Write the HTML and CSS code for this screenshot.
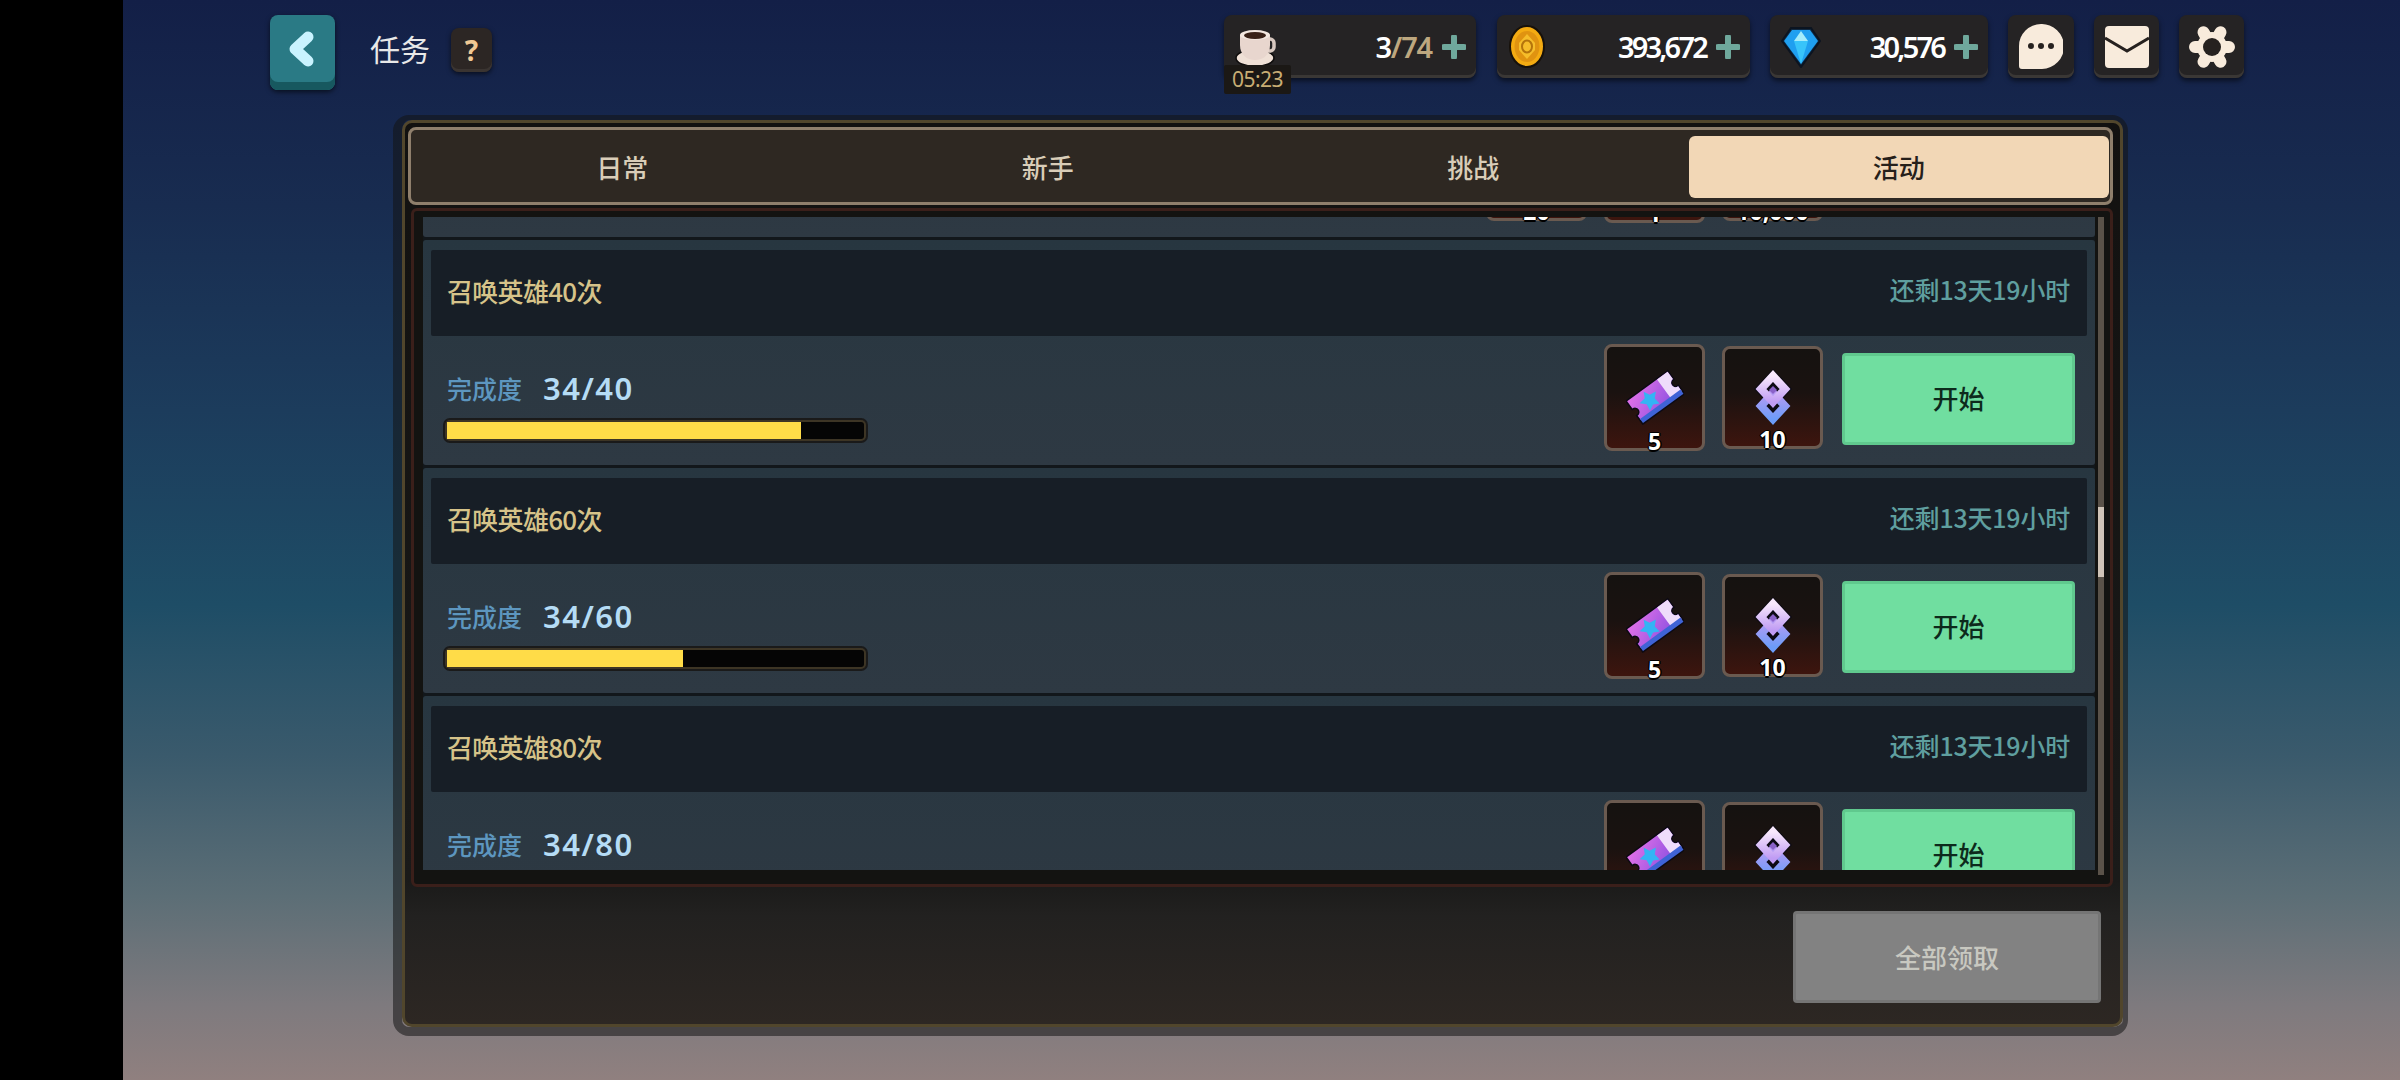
FILE: index.html
```html
<!DOCTYPE html>
<html lang="zh">
<head>
  <meta charset="UTF-8">
  <title>任务</title>
  <link rel="stylesheet" href="styles.css">
</head>
<body>
  <svg class="defs" width="0" height="0">
    <defs>
      <linearGradient id="ticketBody" x1="0" y1="0" x2="1" y2="1">
        <stop offset="0" stop-color="#e070e8"/>
        <stop offset="1" stop-color="#8a4fe0"/>
      </linearGradient>
      <linearGradient id="knotTop" x1="0" y1="0" x2="0" y2="1">
        <stop offset="0" stop-color="#f8e8fc"/>
        <stop offset="1" stop-color="#c09cf4"/>
      </linearGradient>
      <linearGradient id="knotBottom" x1="0" y1="0" x2="0" y2="1">
        <stop offset="0" stop-color="#b89cf4"/>
        <stop offset="1" stop-color="#6c9cf8"/>
      </linearGradient>
      <symbol id="ticket" viewBox="0 0 58 56">
        <g transform="rotate(-36 29 28)">
          <path d="M4 15h50v9a4.500 4.500 0 0 0 0 9v9H4v-9a4.500 4.500 0 0 0 0-9z" fill="#0c0a14" stroke="#0c0a14" stroke-width="3"/>
          <path d="M4 15h50v9a4.500 4.500 0 0 0 0 9v6H4v-6a4.500 4.500 0 0 0 0-9z" fill="url(#ticketBody)"/>
          <path d="M41 15h13v9a4.500 4.500 0 0 0 0 9v6H41z" fill="#efdcfb"/>
          <path d="M4 37h50v5H4z" fill="#3f63d6"/>
          <path d="M23 17l3 6 7 1-5 5 1 7-6-3-6 3 1-7-5-5 7-1z" fill="#33b4f4"/>
        </g>
      </symbol>
      <symbol id="knot" viewBox="0 0 40 56">
        <path d="M20 0L39 20 20 40 1 20z" fill="#0c0a14"/>
        <path d="M20 18L37 36 20 56 3 36z" fill="#0c0a14"/>
        <path d="M20 24L32 37 20 50 8 37z" fill="none" stroke="url(#knotBottom)" stroke-width="8"/>
        <path d="M20 7L32 20 20 33 8 20z" fill="none" stroke="url(#knotTop)" stroke-width="8"/>
        <path d="M20 17L24 21 20 25 16 21z" fill="#8a62c8"/>
      </symbol>
    </defs>
  </svg>

  <div class="sidebar"></div>

  <div class="stage">
    <!-- Top bar -->
    <header class="topbar">
      <button class="back-btn">
        <svg width="65" height="68" viewBox="0 0 65 68"><path d="M38 22L25 34l13 12" fill="none" stroke="#c9f3ff" stroke-width="11" stroke-linecap="round" stroke-linejoin="round"/></svg>
      </button>
      <h1 class="page-title">任务</h1>
      <button class="help-btn">?</button>

      <div class="resources">
        <div class="pill pill-coffee">
          <svg class="res-icon" width="41" height="38" viewBox="0 0 41 38">
            <ellipse cx="20" cy="29" rx="19" ry="8.500" fill="#efe0d6" stroke="#0e0c0c" stroke-width="1.500"/>
            <path d="M32 10h3a4 4 0 0 1 4 4v4a4 4 0 0 1-4 4h-5" fill="none" stroke="#d8c8c0" stroke-width="3.500"/>
            <path d="M5 6h30v10c0 10-7 15-15 15S5 26 5 16z" fill="#e8d6ce"/>
            <ellipse cx="20" cy="6" rx="15" ry="5" fill="#f4e8e0"/>
            <ellipse cx="20" cy="6.500" rx="11" ry="3.400" fill="#3a2218"/>
          </svg>
          <span class="amount">3<span class="amount-max">/74</span></span>
          <svg class="plus" width="24" height="24" viewBox="0 0 24 24"><path d="M12 2v20M2 12h20" stroke="#6fa89c" stroke-width="6" stroke-linecap="round"/></svg>
          <span class="timer">05:23</span>
        </div>
        <div class="pill pill-gold">
          <svg class="res-icon" width="36" height="43" viewBox="0 0 36 43">
            <ellipse cx="18" cy="21.500" rx="17" ry="20.500" fill="#f4ab12" stroke="#17110a" stroke-width="2"/>
            <ellipse cx="18" cy="21.500" rx="12.500" ry="15.500" fill="#e09310"/>
            <path d="M18 9l8 9v7l-8 9-8-9v-7z" fill="#f6bd2a"/>
            <ellipse cx="18" cy="21.500" rx="5" ry="6" fill="none" stroke="#b4740c" stroke-width="2"/>
          </svg>
          <span class="amount">393,672</span>
          <svg class="plus" width="24" height="24" viewBox="0 0 24 24"><path d="M12 2v20M2 12h20" stroke="#6fa89c" stroke-width="6" stroke-linecap="round"/></svg>
        </div>
        <div class="pill pill-gem">
          <svg class="res-icon" width="40" height="42" viewBox="0 0 40 42">
            <path d="M10 2h20l9 13-19 26L1 15z" fill="#0f2a44" stroke="#0c1420" stroke-width="2"/>
            <path d="M11 4h18l8 11-17 23L3 15z" fill="#1f9ff0"/>
            <path d="M13 15h14l-7 23z" fill="#38c4fa"/>
            <path d="M20 5l7 10H13z" fill="#a4ecfb"/>
          </svg>
          <span class="amount">30,576</span>
          <svg class="plus" width="24" height="24" viewBox="0 0 24 24"><path d="M12 2v20M2 12h20" stroke="#6fa89c" stroke-width="6" stroke-linecap="round"/></svg>
        </div>
        <button class="icon-btn icon-btn-chat">
          <svg width="44" height="45" viewBox="0 0 44 45">
            <path d="M22 0a22 22 0 0 1 1 45H3a3 3 0 0 1-3-3V22A22 22 0 0 1 22 0z" fill="#f8ebdc"/>
            <circle cx="12" cy="22" r="3" fill="#26211f"/><circle cx="22" cy="22" r="3" fill="#26211f"/><circle cx="32" cy="22" r="3" fill="#26211f"/>
          </svg>
        </button>
        <button class="icon-btn">
          <svg width="44" height="42" viewBox="0 0 44 42">
            <rect width="44" height="42" rx="4" fill="#f8ebdc"/>
            <path d="M0 12l22 13 22-13" fill="none" stroke="#26211f" stroke-width="3"/>
          </svg>
        </button>
        <button class="icon-btn">
          <svg width="46" height="46" viewBox="0 0 46 46">
            <g stroke="#f8ebdc" stroke-width="12" stroke-linecap="round">
              <path d="M6 23h34M14.500 8.300l17 29.400M31.500 8.300l-17 29.400"/>
            </g>
            <circle cx="23" cy="23" r="15" fill="#f8ebdc"/>
            <circle cx="23" cy="23" r="9" fill="#26211f"/>
          </svg>
        </button>
      </div>
    </header>

    <!-- Quest panel -->
    <main class="panel">
      <div class="panel-inner">
        <nav class="tabs">
          <div class="tab">日常</div>
          <div class="tab">新手</div>
          <div class="tab">挑战</div>
          <div class="tab tab-active">活动</div>
        </nav>

        <div class="list-frame">
          <div class="list">
            <!-- Row scrolled mostly out of view -->
            <section class="row row-scrolled">
              <div class="row-head"></div>
              <div class="row-body">
                <div class="rewards">
                  <div class="item"><span class="count">20</span></div>
                  <div class="item item-lg"><span class="count">1</span></div>
                  <div class="item"><span class="count">10,000</span></div>
                </div>
              </div>
            </section>

            <section class="row">
              <div class="row-head">
                <span class="quest-name">召唤英雄40次</span>
                <span class="time-left">还剩13天19小时</span>
              </div>
              <div class="row-body">
                <div class="progress-col">
                  <div class="progress-label"><span class="label-text">完成度</span><span class="progress-num">34/40</span></div>
                  <div class="bar"><div class="bar-fill" style="width: 85%"></div></div>
                </div>
                <div class="rewards">
                  <div class="item item-lg"><svg width="58" height="56"><use href="#ticket"/></svg><span class="count">5</span></div>
                  <div class="item"><svg width="40" height="56"><use href="#knot"/></svg><span class="count">10</span></div>
                </div>
                <button class="start-btn">开始</button>
              </div>
            </section>

            <section class="row">
              <div class="row-head">
                <span class="quest-name">召唤英雄60次</span>
                <span class="time-left">还剩13天19小时</span>
              </div>
              <div class="row-body">
                <div class="progress-col">
                  <div class="progress-label"><span class="label-text">完成度</span><span class="progress-num">34/60</span></div>
                  <div class="bar"><div class="bar-fill" style="width: 56.7%"></div></div>
                </div>
                <div class="rewards">
                  <div class="item item-lg"><svg width="58" height="56"><use href="#ticket"/></svg><span class="count">5</span></div>
                  <div class="item"><svg width="40" height="56"><use href="#knot"/></svg><span class="count">10</span></div>
                </div>
                <button class="start-btn">开始</button>
              </div>
            </section>

            <section class="row">
              <div class="row-head">
                <span class="quest-name">召唤英雄80次</span>
                <span class="time-left">还剩13天19小时</span>
              </div>
              <div class="row-body">
                <div class="progress-col">
                  <div class="progress-label"><span class="label-text">完成度</span><span class="progress-num">34/80</span></div>
                  <div class="bar"><div class="bar-fill" style="width: 42.5%"></div></div>
                </div>
                <div class="rewards">
                  <div class="item item-lg"><svg width="58" height="56"><use href="#ticket"/></svg><span class="count">5</span></div>
                  <div class="item"><svg width="40" height="56"><use href="#knot"/></svg><span class="count">10</span></div>
                </div>
                <button class="start-btn">开始</button>
              </div>
            </section>
          </div>

          <div class="scrollbar"><div class="scroll-thumb"></div></div>
        </div>

        <footer class="panel-foot">
          <button class="claim-btn">全部领取</button>
        </footer>
      </div>
    </main>
  </div>
</body>
</html>
```

FILE: styles.css
```css
/* Base styles */
html, body {
  margin: 0;
  height: 100%;
}

body {
  display: flex;
  width: 2400px;
  height: 1080px;
  overflow: hidden;
  background-color: #000;
  font-family: "Noto Sans CJK SC", "Noto Sans", sans-serif;
  color: #fff;
}

button {
  font-family: inherit;
  border: none;
  padding: 0;
}

.defs {
  position: absolute;
}

.sidebar {
  width: 123px;
  flex: none;
  background-color: #000;
}

.stage {
  flex: 1;
  background: linear-gradient(180deg, #131f47 0%, #182c50 19%, #1c3c5c 38%, #1e4d66 56%, #3a5a6c 70%, #5c6e76 83%, #7e7a7e 93%, #90807f 100%);
}

/* Top bar */
.topbar {
  display: flex;
  align-items: flex-start;
  height: 75px;
  padding: 15px 156px 0 147px;
}

.back-btn {
  display: flex;
  width: 65px;
  height: 75px;
  flex: none;
  border-radius: 8px;
  background-color: #2a7a85;
  box-shadow: inset 0 -8px 0 #17585f, 0 2px 5px rgba(0, 0, 0, 0.6);
}

.page-title {
  margin: 12px 0 0 35px;
  font-size: 30px;
  font-weight: 400;
  line-height: 42px;
  color: #e8e8e8;
}

.help-btn {
  width: 41px;
  height: 44px;
  margin: 13px 0 0 21px;
  border-radius: 8px;
  background-color: #2c2624;
  box-shadow: inset 0 -3px 0 #3a3431, 0 2px 5px rgba(0, 0, 0, 0.6);
  font-family: "Noto Sans", sans-serif;
  font-size: 28px;
  font-weight: 700;
  line-height: 40px;
  color: #f0c894;
}

.resources {
  display: flex;
  gap: 20px;
  margin-left: auto;
}

.pill {
  position: relative;
  display: flex;
  align-items: center;
  height: 63px;
  padding-right: 10px;
  box-sizing: border-box;
  border-radius: 8px;
  background-color: #252324;
  box-shadow: inset 0 -3px 0 #3a3735, 0 3px 5px rgba(0, 0, 0, 0.55);
}

.pill-coffee {
  width: 252px;
  margin-right: 1px;
  padding-left: 11px;
}

.pill-gold {
  width: 253px;
  padding-left: 12px;
}

.pill-gem {
  width: 218px;
  padding-left: 11px;
}

.res-icon {
  flex: none;
}

.pill-coffee .res-icon {
  margin-top: 2px;
}

.amount {
  margin-left: auto;
  font-family: "Noto Sans", sans-serif;
  font-size: 29px;
  font-weight: 600;
  letter-spacing: -2.8px;
}

.pill-coffee .amount {
  letter-spacing: -1.2px;
}

.amount-max {
  color: #bda77f;
}

.plus {
  flex: none;
  margin-left: 10px;
}

.timer {
  position: absolute;
  left: 0;
  top: 50px;
  width: 67px;
  height: 29px;
  border-radius: 2px;
  background-color: #1b1815;
  font-family: "Noto Sans", sans-serif;
  font-size: 21px;
  line-height: 29px;
  letter-spacing: -0.5px;
  text-align: center;
  color: #c8ad74;
}

.icon-btn {
  display: flex;
  align-items: center;
  justify-content: center;
  width: 65px;
  height: 63px;
  border-radius: 8px;
  background-color: #252324;
  box-shadow: inset 0 -3px 0 #3a3735, 0 3px 5px rgba(0, 0, 0, 0.55);
}

.icon-btn-chat {
  width: 66px;
}

/* Quest panel */
.panel {
  width: 1735px;
  height: 921px;
  margin: 25px 0 0 270px;
  box-sizing: border-box;
  border-style: solid;
  border-width: 5px 5px 9px 9px;
  border-color: rgba(20, 20, 20, 0.55);
  border-radius: 16px;
}

.panel-inner {
  display: flex;
  flex-direction: column;
  height: 100%;
  box-sizing: border-box;
  border: 3px solid #51462c;
  border-radius: 10px;
  padding: 4px 7px 0 3px;
  background: linear-gradient(180deg, #121110 0%, #1a1a19 84%, #222120 88%, #2d2723 100%);
}

.tabs {
  display: grid;
  grid-template-columns: repeat(4, 1fr);
  column-gap: 5px;
  height: 78px;
  flex: none;
  box-sizing: border-box;
  padding: 6px 1px 4px 1px;
  border: 3px solid #8f7f6c;
  border-radius: 8px;
  background-color: #2e2822;
}

.tab {
  display: flex;
  align-items: center;
  justify-content: center;
  padding-bottom: 2px;
  border-radius: 6px;
  font-size: 26px;
  font-weight: 500;
  color: #d9cdb8;
}

.tab-active {
  background-color: #f2d7b6;
  color: #26201a;
}

.list-frame {
  display: flex;
  height: 679px;
  flex: none;
  margin: 3px 0 0 3px;
  box-sizing: border-box;
  padding: 6px 6px 14px 9px;
  border: 3px solid #3a1f1a;
  border-radius: 6px;
  background-color: #131311;
}

.list {
  flex: 1;
  min-width: 0;
  overflow: hidden;
  background-color: #12171b;
}

.row {
  height: 225px;
  margin-bottom: 3px;
  box-sizing: border-box;
  padding: 10px 8px 0;
  border-radius: 3px;
  background: linear-gradient(180deg, #273640 0%, #2e3943 100%);
}

.row-scrolled {
  margin-top: -205px;
}

.row-scrolled .rewards {
  margin-right: 252px;
}

.row-head {
  display: flex;
  align-items: center;
  justify-content: space-between;
  height: 86px;
  box-sizing: border-box;
  padding: 0 17px 6px 16px;
  border-radius: 2px;
  background-color: #171e26;
}

.quest-name {
  font-size: 26px;
  font-weight: 500;
  letter-spacing: -0.7px;
  color: #d6c389;
}

.time-left {
  margin-bottom: 3px;
  font-size: 25px;
  font-weight: 500;
  letter-spacing: -0.2px;
  color: #5f9f9f;
}

.row-body {
  display: flex;
  align-items: center;
  justify-content: flex-end;
  height: 122px;
  padding: 0 12px 0 16px;
}

.progress-col {
  align-self: flex-start;
  margin: 34px auto 0 0;
}

.progress-label {
  display: flex;
  align-items: center;
  height: 36px;
}

.label-text {
  font-size: 25px;
  font-weight: 500;
  color: #5d96bf;
}

.progress-num {
  margin-left: 21px;
  font-family: "Noto Sans", sans-serif;
  font-size: 31px;
  font-weight: 600;
  letter-spacing: 1.5px;
  color: #b5dcf5;
}

.bar {
  width: 417px;
  height: 17px;
  margin-top: 16px;
  border-radius: 3px;
  background-color: #050505;
  box-shadow: 0 0 0 2px #3d3525, 0 0 0 4px #1a1a1a;
}

.bar-fill {
  height: 100%;
  background-color: #ffdc48;
}

.rewards {
  display: flex;
  align-items: center;
  gap: 17px;
}

.item {
  position: relative;
  display: flex;
  align-items: center;
  justify-content: center;
  width: 101px;
  height: 103px;
  box-sizing: border-box;
  border: 3px solid #6a5a50;
  border-radius: 8px;
  background: linear-gradient(180deg, #151210 0%, #1a1210 45%, #3d150e 100%);
}

.item-lg {
  height: 107px;
}

.count {
  position: absolute;
  left: 0;
  right: 0;
  bottom: -5px;
  font-family: "Noto Sans", sans-serif;
  font-size: 23px;
  font-weight: 700;
  line-height: 24px;
  text-align: center;
  color: #fff;
  text-shadow: -1.5px 0 #000, 1.5px 0 #000, 0 -1.5px #000, 0 1.5px #000;
}

.start-btn {
  width: 233px;
  height: 92px;
  margin: 3px 0 0 19px;
  flex: none;
  box-sizing: border-box;
  padding-bottom: 2px;
  border: 3px solid #60c98e;
  border-radius: 4px;
  background-color: #70dea0;
  font-size: 26px;
  font-weight: 500;
  color: #0d2a1c;
}

.scrollbar {
  width: 6px;
  height: 658px;
  margin-left: 3px;
  flex: none;
  overflow: hidden;
  background-color: #5a5249;
}

.scroll-thumb {
  height: 70px;
  margin-top: 290px;
  background-color: #d0c4b8;
}

.panel-foot {
  display: flex;
  justify-content: flex-end;
  padding: 24px 12px 0 0;
}

.claim-btn {
  width: 308px;
  height: 92px;
  padding-bottom: 2px;
  border: 3px solid #757575;
  border-radius: 4px;
  background-color: #828282;
  font-size: 26px;
  font-weight: 500;
  color: #c8c8c0;
}
```
